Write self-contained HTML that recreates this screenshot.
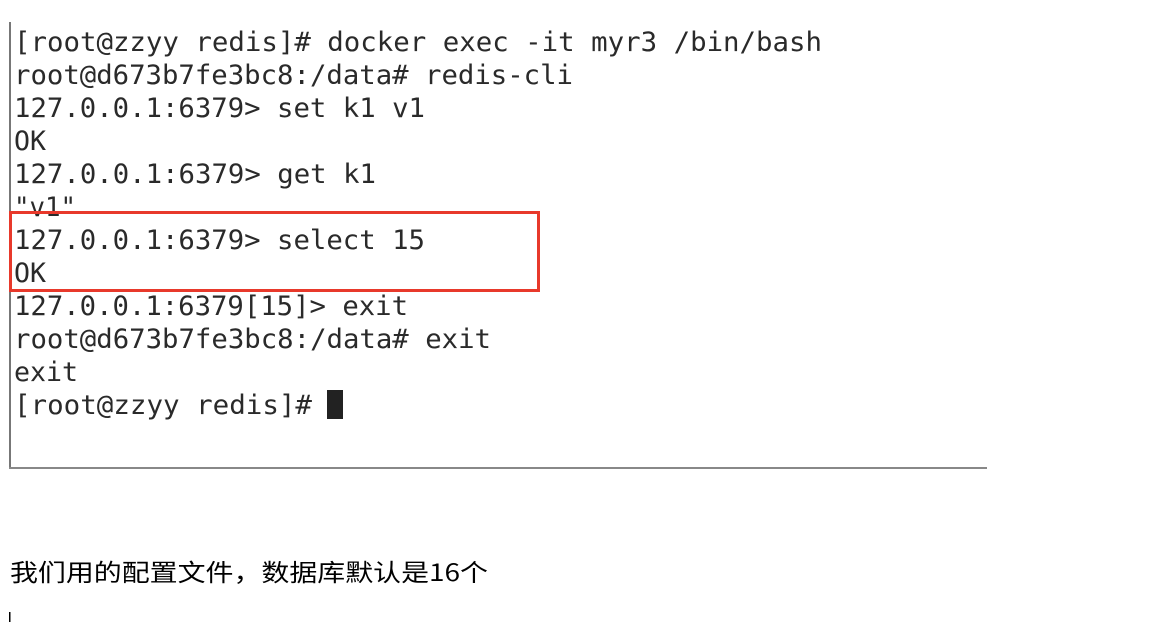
<!DOCTYPE html>
<html><head><meta charset="utf-8"><style>
html,body{margin:0;padding:0;background:#fff;width:1168px;height:622px;overflow:hidden}
svg{display:block}
</style></head><body>
<svg width="1168" height="622" viewBox="0 0 1168 622" xmlns="http://www.w3.org/2000/svg">
<rect x="0" y="0" width="1168" height="622" fill="#fff"/>
<rect x="9" y="22" width="2" height="447" fill="#777"/>
<rect x="9" y="467" width="978" height="2" fill="#888"/>
<g font-family="DejaVu Sans Mono, Liberation Mono, monospace" font-size="27" fill="#2a2a2a">
<text x="14" y="51" textLength="808" lengthAdjust="spacingAndGlyphs">[root@zzyy redis]# docker exec -it myr3 /bin/bash</text>
<text x="14" y="84" textLength="559" lengthAdjust="spacingAndGlyphs">root@d673b7fe3bc8:/data# redis-cli</text>
<text x="14" y="117" textLength="411" lengthAdjust="spacingAndGlyphs">127.0.0.1:6379&gt; set k1 v1</text>
<text x="14" y="150" textLength="32" lengthAdjust="spacingAndGlyphs">OK</text>
<text x="14" y="183" textLength="362" lengthAdjust="spacingAndGlyphs">127.0.0.1:6379&gt; get k1</text>
<text x="14" y="216" textLength="62" lengthAdjust="spacingAndGlyphs">"v1"</text>
<text x="14" y="249" textLength="411" lengthAdjust="spacingAndGlyphs">127.0.0.1:6379&gt; select 15</text>
<text x="14" y="282" textLength="32" lengthAdjust="spacingAndGlyphs">OK</text>
<text x="14" y="315" textLength="394" lengthAdjust="spacingAndGlyphs">127.0.0.1:6379[15]&gt; exit</text>
<text x="14" y="348" textLength="477" lengthAdjust="spacingAndGlyphs">root@d673b7fe3bc8:/data# exit</text>
<text x="14" y="381" textLength="64" lengthAdjust="spacingAndGlyphs">exit</text>
<text x="14" y="414" textLength="298" lengthAdjust="spacingAndGlyphs">[root@zzyy redis]#</text>
</g>
<rect x="327" y="390" width="16" height="29" fill="#222"/>
<rect x="10.5" y="212.5" width="528" height="78" fill="none" stroke="#e8392b" stroke-width="3"/>
<text x="10" y="581" font-family="WenQuanYi Zen Hei, Noto Sans CJK SC, sans-serif" font-size="24" fill="#000" textLength="478" lengthAdjust="spacingAndGlyphs">我们用的配置文件，数据库默认是16个</text>
<rect x="9" y="612" width="1.5" height="10" fill="#000"/>
</svg>
</body></html>
